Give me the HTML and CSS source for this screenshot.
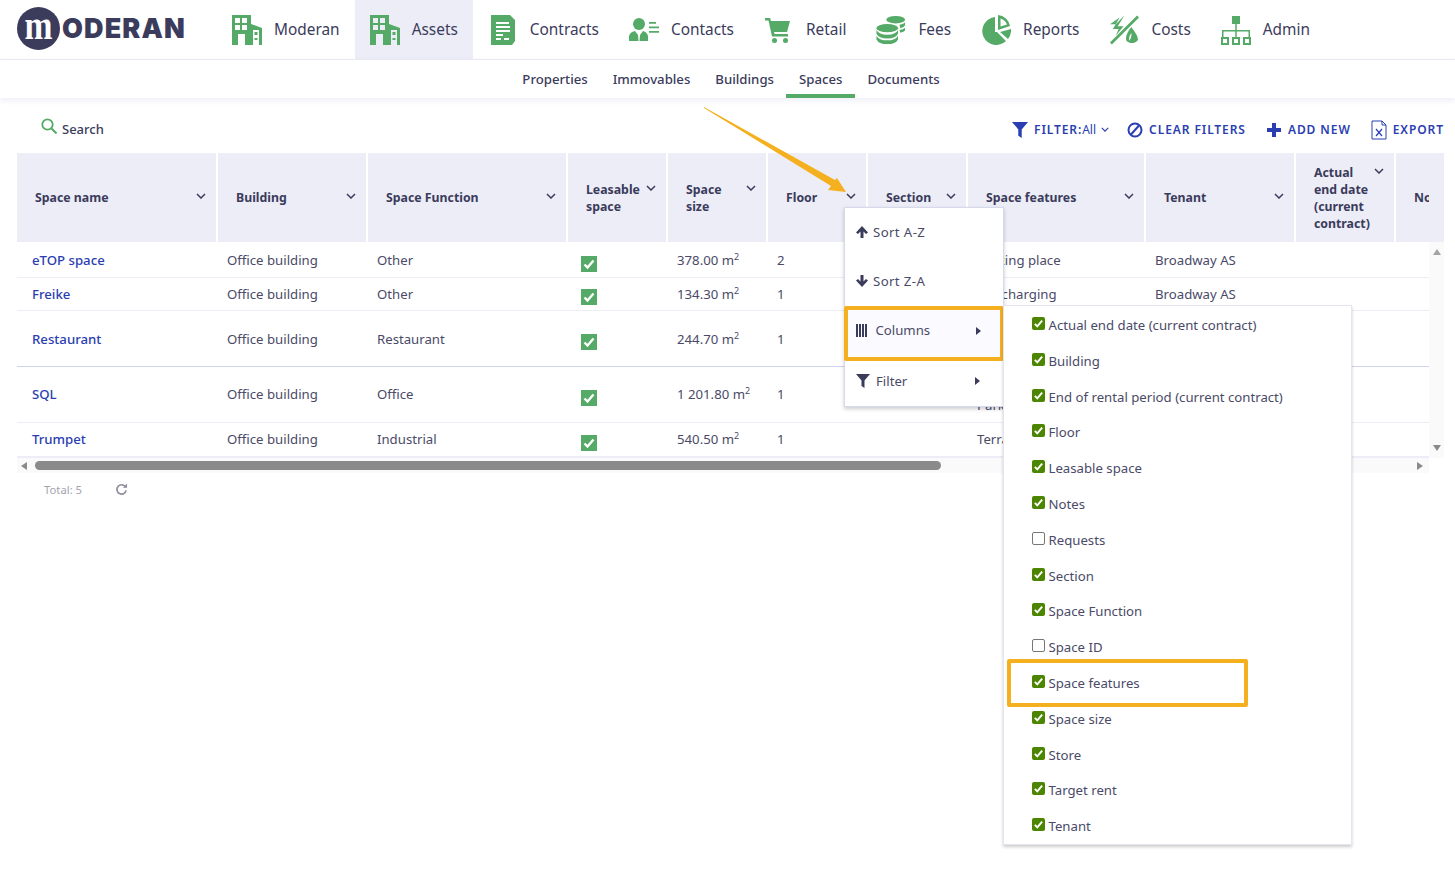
FILE: index.html
```html
<!DOCTYPE html>
<html lang="en">
<head>
<meta charset="utf-8">
<title>Moderan - Spaces</title>
<link rel="stylesheet" href="styles.css">
</head>
<body>
<svg class="defs" width="0" height="0" aria-hidden="true">
  <symbol id="i-building" viewBox="0 0 30 30"><path fill-rule="evenodd" d="M0 0H19V9L30 13V30H0ZM3 3V8H8V3ZM10 3V8H15V3ZM3 10V15H8V10ZM10 10V15H15V10ZM6 19V30H13V19ZM21 15V30H27V15Z"/><path d="M22.500 17h3v3h-3zM22.500 23h3v2h-3z"/></symbol>
  <symbol id="i-doc" viewBox="0 0 30 30"><path fill-rule="evenodd" d="M3 0H22L27 5V26L24 30H3ZM8 7V9H21V7ZM8 11V13H22V11ZM8 15V17H22V15ZM8 19V21H15V19ZM8 23V25H13V23ZM16 23V25H21V23Z"/></symbol>
  <symbol id="i-contact" viewBox="0 0 30 30"><circle cx="10" cy="9" r="6"/><path d="M0 26V21Q1 17 6 16L9 20L9.500 26H10.500L11 20L14 16Q18 17 19 21V26Z"/><path d="M20 7h7v1.700h-7zM20 11.500h10v1.700h-10zM20 16h10v1.700h-10z"/></symbol>
  <symbol id="i-cart" viewBox="0 0 30 30"><path d="M1 3H6L7 6H26L23 17H10L10.500 19H24V21.500H8L4.500 5.500H1Z"/><circle cx="10.500" cy="25.500" r="2.500"/><circle cx="21.500" cy="25.500" r="2.500"/></symbol>
  <symbol id="i-coins" viewBox="0 0 32 30"><ellipse cx="21" cy="4" rx="10" ry="4"/><path d="M25 9.500Q29 9 31 7V10Q30 12 26 13ZM25 15Q29 14.500 31 12.500V15.500Q30 17 26 18Z"/><ellipse cx="12" cy="13" rx="11.500" ry="4.500"/><path d="M0.500 15Q3 20 12 20T23.500 15V19Q21 24 12 24T0.500 19ZM0.500 21Q3 26 12 26T23.500 21V25Q21 30 12 30T0.500 25Z"/></symbol>
  <symbol id="i-pie" viewBox="0 0 30 30"><path d="M14 2A14 14 0 1 0 25 26L16 17H14Z"/><path fill-rule="evenodd" d="M17 0A13 13 0 0 1 29 11L17 15ZM19.500 3.500V11.500L26 9.500A10 10 0 0 0 19.500 3.500Z"/><path d="M19 17L30 14A14 14 0 0 1 27 24Z"/></symbol>
  <symbol id="i-costs" viewBox="0 0 31 30"><path d="M29 0L31 2L3 30L1 28Z"/><path d="M16 0L7 9H1L11 2L4 14H10L7 21L15 11H9Z"/><path d="M23 12Q30 21 30 25A7 6 0 0 1 18 26Q16 21 23 12ZM23 18Q20 22 21 26Q24 22 23 18Z" fill-rule="evenodd"/></symbol>
  <symbol id="i-admin" viewBox="0 0 30 30"><path d="M11 1h8v8h-8z"/><path d="M14.250 9h1.500v6H29v7h-1.500v-5.500H15.750V22h-1.500v-5.500H2.500V22H1v-7h13.250z"/><path fill-rule="evenodd" d="M0 22h8v8H0zM2 24v4h4v-4zM11 22h8v8h-8zM13 24v4h4v-4zM22 22h8v8h-8zM24 24v4h4v-4z"/></symbol>
  <symbol id="i-chev" viewBox="0 0 10 6"><path d="M1 1L5 5L9 1" fill="none" stroke="currentColor" stroke-width="1.500"/></symbol>
  <symbol id="i-funnel" viewBox="0 0 14 14"><path d="M0 0H14L8.500 6.500V14L5.500 12V6.500Z"/></symbol>
  <symbol id="i-tick" viewBox="0 0 16 16"><path d="M3.500 8.500L6.500 11.500L12.500 4.500" fill="none" stroke="#fff" stroke-width="2.400"/></symbol>
  <symbol id="i-up" viewBox="0 0 14 14"><path d="M7 1L13 7.500L11 9L8.500 6.500V13H5.500V6.500L3 9L1 7.500Z"/></symbol>
</svg>

<div class="page">
  <header class="topbar">
    <div class="logo">
      <span class="logo-m"><span class="logo-m-in">m</span></span><span class="logo-text">ODERAN</span>
    </div>
    <nav class="mainnav">
      <a class="nav-item"><svg class="nav-icon"><use href="#i-building"/></svg>Moderan</a>
      <a class="nav-item active"><svg class="nav-icon"><use href="#i-building"/></svg>Assets</a>
      <a class="nav-item"><svg class="nav-icon"><use href="#i-doc"/></svg>Contracts</a>
      <a class="nav-item"><svg class="nav-icon"><use href="#i-contact"/></svg>Contacts</a>
      <a class="nav-item"><svg class="nav-icon"><use href="#i-cart"/></svg>Retail</a>
      <a class="nav-item"><svg class="nav-icon"><use href="#i-coins"/></svg>Fees</a>
      <a class="nav-item"><svg class="nav-icon"><use href="#i-pie"/></svg>Reports</a>
      <a class="nav-item"><svg class="nav-icon"><use href="#i-costs"/></svg>Costs</a>
      <a class="nav-item"><svg class="nav-icon"><use href="#i-admin"/></svg>Admin</a>
    </nav>
  </header>
  <nav class="subnav">
    <a class="tab">Properties</a>
    <a class="tab">Immovables</a>
    <a class="tab">Buildings</a>
    <a class="tab current">Spaces</a>
    <a class="tab">Documents</a>
  </nav>

  <section class="toolbar">
    <div class="search">
      <svg class="search-icon" viewBox="0 0 16 16"><circle cx="6.500" cy="6.500" r="5.200" fill="none" stroke="#54aa66" stroke-width="1.800"/><path d="M10.500 10.500L15.500 15.500" stroke="#54aa66" stroke-width="2"/></svg>
      <span>Search</span>
    </div>
    <div class="actions">
      <a class="action filter"><svg class="act-icon"><use href="#i-funnel"/></svg><span>FILTER:</span><span class="all">All</span><svg class="mini-chev"><use href="#i-chev"/></svg></a>
      <a class="action"><svg class="act-icon" viewBox="0 0 16 16"><circle cx="8" cy="8" r="6.500" fill="none" stroke="#2a3eb1" stroke-width="2"/><path d="M4 12.500L12 3.500" stroke="#2a3eb1" stroke-width="2"/></svg><span>CLEAR FILTERS</span></a>
      <a class="action"><svg class="act-icon" viewBox="0 0 16 16"><path d="M6 1H10V6H15V10H10V15H6V10H1V6H6Z" fill="#2a3eb1"/></svg><span>ADD NEW</span></a>
      <a class="action"><svg class="act-icon export" viewBox="0 0 16 20"><path d="M1 1H11L15 5V19H1Z M11 1V5H15" fill="none" stroke="#2a3eb1"/><path d="M5 9L11 16M11 9L5 16" stroke="#2a3eb1" stroke-width="1.200"/></svg><span>EXPORT</span></a>
    </div>
  </section>

  <section class="grid">
    <div class="grid-main">
      <div class="grid-clip">
        <table class="data">
          <colgroup>
            <col class="c200"><col class="c150"><col class="c200b"><col class="c100"><col class="c100"><col class="c100"><col class="c100"><col class="c178"><col class="c150"><col class="c100"><col class="c100">
          </colgroup>
          <thead>
            <tr>
              <th><div class="th"><span>Space name</span><svg class="chev"><use href="#i-chev"/></svg></div></th>
              <th><div class="th"><span>Building</span><svg class="chev"><use href="#i-chev"/></svg></div></th>
              <th><div class="th"><span>Space Function</span><svg class="chev"><use href="#i-chev"/></svg></div></th>
              <th class="multi"><div class="th"><span>Leasable space</span><svg class="chev"><use href="#i-chev"/></svg></div></th>
              <th class="multi"><div class="th"><span>Space size</span><svg class="chev"><use href="#i-chev"/></svg></div></th>
              <th><div class="th"><span>Floor</span><svg class="chev"><use href="#i-chev"/></svg></div></th>
              <th><div class="th"><span>Section</span><svg class="chev"><use href="#i-chev"/></svg></div></th>
              <th><div class="th"><span>Space features</span><svg class="chev"><use href="#i-chev"/></svg></div></th>
              <th><div class="th"><span>Tenant</span><svg class="chev"><use href="#i-chev"/></svg></div></th>
              <th class="multi"><div class="th"><span>Actual end date (current contract)</span><svg class="chev"><use href="#i-chev"/></svg></div></th>
              <th><div class="th"><span>Notes</span></div></th>
            </tr>
          </thead>
          <tbody>
            <tr class="r1">
              <td class="name"><a>eTOP space</a></td><td>Office building</td><td>Other</td>
              <td class="cb"><span class="tick"><svg><use href="#i-tick"/></svg></span></td>
              <td>378.00 m<sup>2</sup></td><td>2</td><td></td><td>Parking place</td><td>Broadway AS</td><td></td><td></td>
            </tr>
            <tr class="r2">
              <td class="name"><a>Freike</a></td><td>Office building</td><td>Other</td>
              <td class="cb"><span class="tick"><svg><use href="#i-tick"/></svg></span></td>
              <td>134.30 m<sup>2</sup></td><td>1</td><td></td><td>Car charging</td><td>Broadway AS</td><td></td><td></td>
            </tr>
            <tr class="r3">
              <td class="name"><a>Restaurant</a></td><td>Office building</td><td>Restaurant</td>
              <td class="cb"><span class="tick"><svg><use href="#i-tick"/></svg></span></td>
              <td>244.70 m<sup>2</sup></td><td>1</td><td></td><td></td><td></td><td></td><td></td>
            </tr>
            <tr class="r4">
              <td class="name"><a>SQL</a></td><td>Office building</td><td>Office</td>
              <td class="cb"><span class="tick"><svg><use href="#i-tick"/></svg></span></td>
              <td>1 201.80 m<sup>2</sup></td><td>1</td><td></td><td>Terrace,<br>Parking</td><td></td><td></td><td></td>
            </tr>
            <tr class="r5">
              <td class="name"><a>Trumpet</a></td><td>Office building</td><td>Industrial</td>
              <td class="cb"><span class="tick"><svg><use href="#i-tick"/></svg></span></td>
              <td>540.50 m<sup>2</sup></td><td>1</td><td></td><td>Terrace</td><td></td><td></td><td></td>
            </tr>
          </tbody>
        </table>
      </div>
      <div class="vscroll">
        <div class="vhead"></div>
        <div class="vtrack"><span class="tri tri-up"></span><span class="tri tri-down"></span></div>
      </div>
    </div>
    <div class="hscroll">
      <span class="tri tri-left"></span>
      <span class="thumb"></span>
      <span class="tri tri-right"></span>
    </div>
    <div class="foot">
      <span>Total: 5</span>
      <svg class="refresh" viewBox="0 0 14 14"><path d="M11.500 4.500A5 5 0 1 0 12 8" fill="none" stroke="#8e8e9e" stroke-width="1.800"/><path d="M8.500 5H13V0.500Z" fill="#8e8e9e"/></svg>
    </div>
  </section>

  <div class="menu">
    <div class="menu-row sort"><svg class="menu-icon"><use href="#i-up"/></svg>Sort A-Z</div>
    <div class="menu-row sort"><svg class="menu-icon down"><use href="#i-up"/></svg>Sort Z-A</div>
    <div class="menu-row boxed">
      <span class="cols-icon"><i></i><i></i><i></i><i></i></span>Columns<span class="caret"></span>
    </div>
    <div class="menu-row filter-row"><svg class="menu-icon"><use href="#i-funnel"/></svg>Filter<span class="caret"></span></div>
  </div>

  <div class="submenu">
    <label class="opt"><span class="box on"><svg><use href="#i-tick"/></svg></span>Actual end date (current contract)</label>
    <label class="opt"><span class="box on"><svg><use href="#i-tick"/></svg></span>Building</label>
    <label class="opt"><span class="box on"><svg><use href="#i-tick"/></svg></span>End of rental period (current contract)</label>
    <label class="opt"><span class="box on"><svg><use href="#i-tick"/></svg></span>Floor</label>
    <label class="opt"><span class="box on"><svg><use href="#i-tick"/></svg></span>Leasable space</label>
    <label class="opt"><span class="box on"><svg><use href="#i-tick"/></svg></span>Notes</label>
    <label class="opt"><span class="box"></span>Requests</label>
    <label class="opt"><span class="box on"><svg><use href="#i-tick"/></svg></span>Section</label>
    <label class="opt"><span class="box on"><svg><use href="#i-tick"/></svg></span>Space Function</label>
    <label class="opt"><span class="box"></span>Space ID</label>
    <label class="opt"><span class="box on"><svg><use href="#i-tick"/></svg></span>Space features</label>
    <label class="opt"><span class="box on"><svg><use href="#i-tick"/></svg></span>Space size</label>
    <label class="opt"><span class="box on"><svg><use href="#i-tick"/></svg></span>Store</label>
    <label class="opt"><span class="box on"><svg><use href="#i-tick"/></svg></span>Target rent</label>
    <label class="opt"><span class="box on"><svg><use href="#i-tick"/></svg></span>Tenant</label>
  </div>

  <div class="mark mark-feature"></div>
  <svg class="arrow" viewBox="0 0 145 90"><path d="M0 0L131 73L133 71L142 85L124 83L127 79L0 1Z" fill="#f5b020"/></svg>
</div>
</body>
</html>
```

FILE: styles.css
```css
* { box-sizing: border-box; }
html, body { margin: 0; padding: 0; background: #fff; }
body { font-family: "Noto Sans", sans-serif; font-size: 13px; color: #4a4a68; overflow: hidden; }
.defs { position: absolute; }
.page { position: relative; width: 1455px; height: 869px; overflow: hidden; }

.topbar { display: flex; height: 60px; border-bottom: 1px solid #ecedf6; padding-left: 17px; }
.logo { display: flex; align-items: center; width: 200px; height: 57px; }
.logo-m { display: flex; justify-content: center; width: 43px; height: 43px; border-radius: 50%; background: #3b3b5c; color: #fff; font-family: "Liberation Serif", serif; font-weight: 700; font-size: 42px; line-height: 36px; flex: none; }
.logo-m-in { display: block; transform: scaleX(.8); }
.logo-text { font-family: "Inter", sans-serif; font-weight: 900; font-size: 27px; line-height: 36px; color: #3b3b5c; margin-left: 2px; margin-top: 1px; letter-spacing: 1.100px; }
.mainnav { display: flex; }
.nav-item { display: flex; align-items: center; height: 59px; padding: 0 15px; font-size: 15.400px; color: #3b3b5c; }
.nav-item.active { background: #ecedf6; }
.nav-icon { width: 30px; height: 30px; margin-right: 12px; fill: #54aa66; flex: none; }

.subnav { display: flex; justify-content: center; height: 38px; padding-left: 7px; box-shadow: 0 2px 6px rgba(60, 70, 160, .1); position: relative; }
.tab { display: flex; align-items: center; padding: 4px 12.500px 0; height: 38px; font-size: 13.200px; font-weight: 500; color: #3b3b5c; border-bottom: 4px solid transparent; }
.tab.current { border-bottom-color: #54aa66; }

.toolbar { display: flex; justify-content: space-between; align-items: center; height: 55px; padding: 6px 11px 0 41px; }
.search { display: flex; align-items: center; gap: 5px; font-size: 13px; font-weight: 500; color: #3b3b5c; }
.search-icon { width: 16px; height: 16px; margin-top: -5px; }
.actions { display: flex; align-items: center; gap: 20px; margin-top: 2px; }
.action { display: flex; align-items: center; gap: 6px; font-size: 12px; font-weight: 600; letter-spacing: .92px; color: #2a3eb1; }
.action .all { font-weight: 400; letter-spacing: 0; margin-left: -6px; }
.act-icon { width: 16px; height: 16px; fill: #2a3eb1; flex: none; }
.act-icon.export { height: 20px; }
.filter { margin-right: -2px; }
.mini-chev { width: 8px; height: 5px; color: #2a3eb1; margin-left: -1px; }

.grid { padding-left: 17px; width: 1444px; }
.grid-main { display: flex; }
.grid-clip { width: 1412px; overflow: hidden; }
.data { table-layout: fixed; width: 1479px; border-collapse: separate; border-spacing: 0; }
.c200 { width: 201px; }
.c150 { width: 150px; }
.c200b { width: 200px; }
.c100 { width: 100px; }
.c178 { width: 178px; }
thead tr { height: 89px; }
th { background: #ecedf6; border-right: 2px solid #fff; padding: 0 10px 0 18px; text-align: left; font-size: 12.300px; font-weight: 700; line-height: 17px; color: #3b3b5c; }
th.multi { padding-top: 1px; }
.th { display: flex; justify-content: space-between; align-items: flex-start; gap: 4px; }
.chev { width: 10px; height: 6px; flex: none; margin-top: 4px; color: #3b3b5c; }
td { padding: 0 4px 0 9px; border-bottom: 1px solid #ecedf6; font-size: 13.200px; line-height: 21px; color: #4a4a68; white-space: nowrap; overflow: hidden; }
td sup { font-size: 9px; line-height: 0; }
.r1 { height: 36px; }
.r2 { height: 33px; }
.r3 { height: 56px; }
.r4 { height: 56px; }
.r5 { height: 35px; }
.r1 td, .r3 td { padding-top: 1px; }
.r3 td { border-bottom-color: #cfd3ec; }
.r5 td { border-bottom: 2px solid #ecedf6; }
td.name { padding-left: 15px; }
td.name a { color: #2a3eb1; font-weight: 500; }
td.cb { padding-left: 13px; padding-top: 6px; }
.r1 td.cb { padding-top: 8px; }
.tick { display: block; width: 16px; height: 16px; background: #54aa66; }
.tick svg { display: block; width: 16px; height: 16px; }

.vscroll { width: 15px; flex: none; display: flex; flex-direction: column; }
.vhead { height: 89px; background: #ecedf6; }
.vtrack { flex: 1; background: #fafafa; display: flex; flex-direction: column; justify-content: space-between; align-items: center; padding: 7px 0 7px; }
.tri { display: block; width: 0; height: 0; border-style: solid; }
.tri-up { border-width: 0 4.500px 6px; border-color: transparent transparent #a3a3a3; }
.tri-down { border-width: 6px 4.500px 0; border-color: #8a8a8a transparent transparent; }
.tri-left { border-width: 4.500px 6px 4.500px 0; border-color: transparent #8a8a8a transparent transparent; margin-left: 4px; }
.tri-right { border-width: 4.500px 0 4.500px 6px; border-color: transparent transparent transparent #8a8a8a; margin-left: 476px; }
.hscroll { display: flex; align-items: center; height: 15px; width: 1412px; background: #fafafa; }
.thumb { display: block; width: 906px; height: 9px; background: #8a8a8a; border-radius: 5px; margin-left: 8px; }
.foot { display: flex; align-items: center; height: 33px; padding-left: 27px; font-size: 11.300px; color: #a4a4b0; gap: 33px; }
.refresh { width: 13px; height: 13px; }

.menu { position: absolute; left: 844px; top: 207px; width: 160px; height: 200px; background: #fff; border: 1px solid #d6d9ec; box-shadow: 0 2px 4px rgba(0, 0, 30, .2); font-size: 13.200px; color: #4a4a68; }
.menu-row { position: relative; display: flex; align-items: center; height: 49px; padding-left: 10px; }
.menu-row.sort { padding-bottom: 2px; letter-spacing: .4px; }
.menu-icon { width: 14px; height: 14px; fill: #3b3b5c; margin-right: 4px; flex: none; }
.menu-icon.down { transform: rotate(180deg); }
.menu-row.boxed { margin: 0 -1px; height: 55px; width: 160px; border: 4px solid #f5b020; background: #fafaff; padding-left: 8px; padding-bottom: 7px; border-radius: 2px; }
.filter-row { padding-left: 11px; height: 47px; padding-bottom: 7px; }
.filter-row .menu-icon { margin-right: 6px; }
.cols-icon { display: flex; gap: 1px; margin-right: 8.500px; }
.cols-icon i { display: block; width: 2px; height: 13px; background: #3b3b5c; }
.caret { position: absolute; left: 130px; top: 50%; margin-top: -4px; width: 0; height: 0; border-style: solid; border-width: 4px 0 4px 5px; border-color: transparent transparent transparent #3b3b5c; }
.boxed .caret { left: 128px; margin-top: -7px; }
.filter-row .caret { margin-top: -8px; }

.submenu { position: absolute; left: 1003px; top: 305px; width: 349px; height: 540px; background: #fff; border: 1px solid #e4e5ee; box-shadow: 0 2px 3px rgba(0, 0, 0, .2); padding: 1.200px 0 0 28px; font-size: 13.200px; color: #4a4a68; }
.opt { display: flex; align-items: center; height: 35.800px; }
.box { display: block; width: 13px; height: 13px; margin-right: 3.500px; margin-top: -3px; border: 1px solid #777; border-radius: 2px; background: #fff; flex: none; }
.box.on { background: #4c8500; border: 0; }
.box svg { display: block; width: 13px; height: 13px; }

.mark { position: absolute; border: 4px solid #f5b020; border-radius: 2px; }
.mark-feature { left: 1007px; top: 659px; width: 241px; height: 48px; }
.arrow { position: absolute; left: 704px; top: 107px; width: 145px; height: 90px; }
```
